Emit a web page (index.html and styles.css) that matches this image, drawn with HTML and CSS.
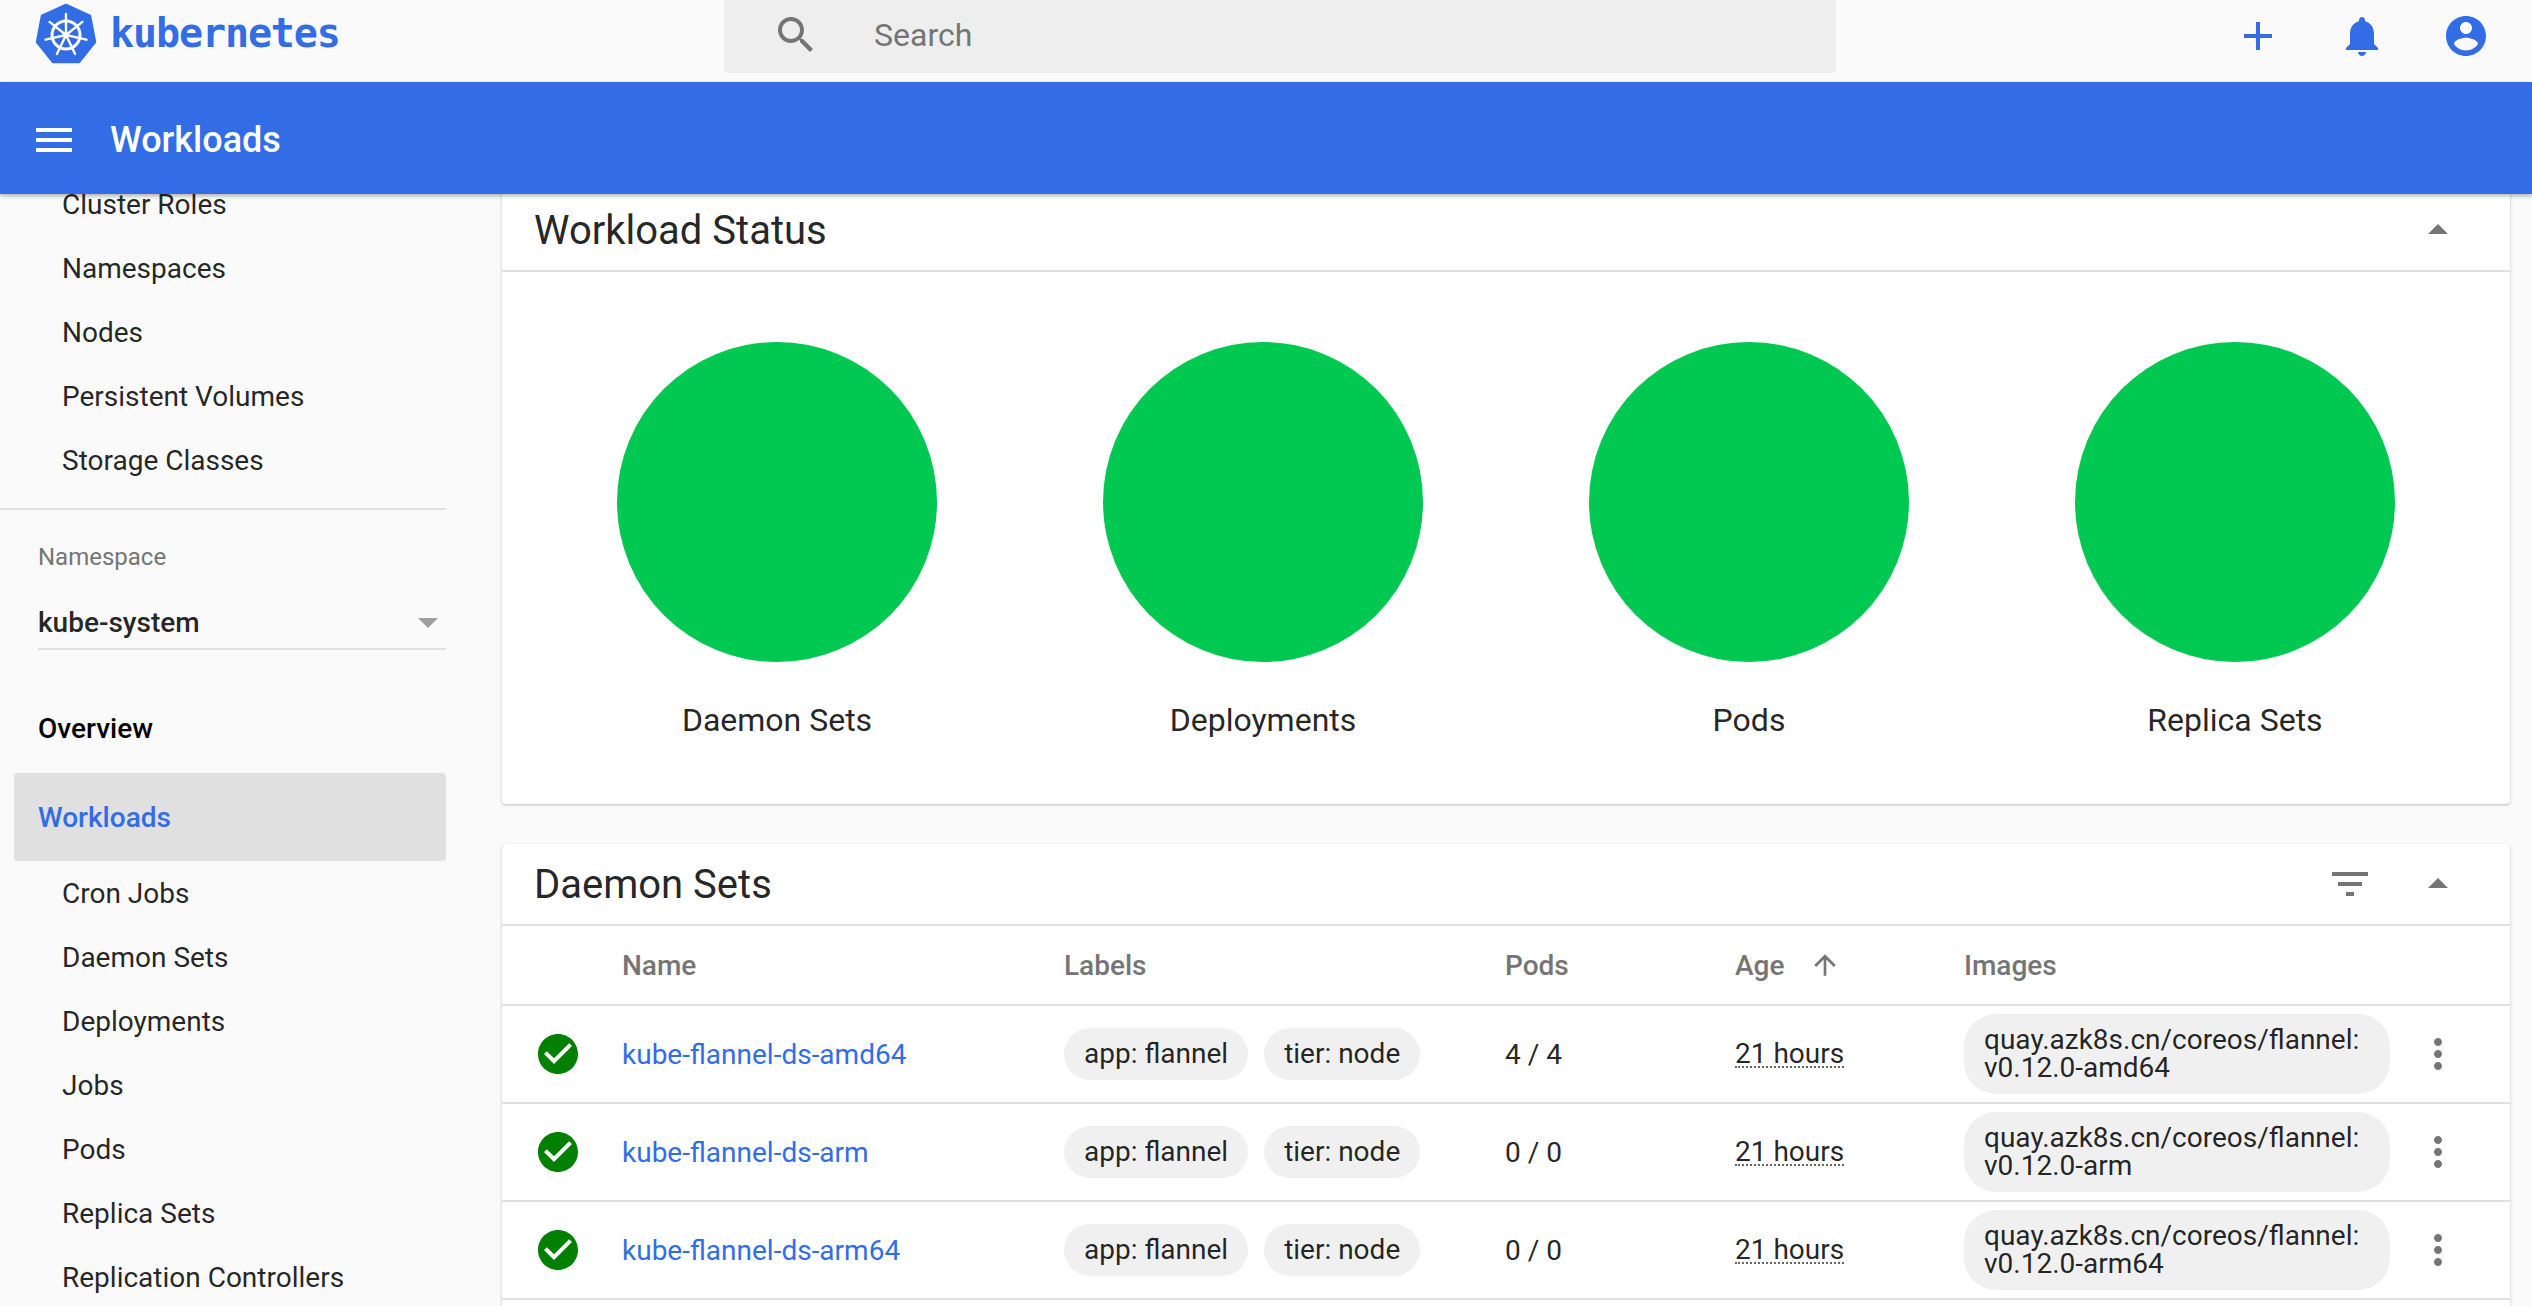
FILE: index.html
```html
<!DOCTYPE html>
<html lang="en">
<head>
    <meta charset="UTF-8">
    <title>Workloads - Kubernetes Dashboard</title>
    <link rel="stylesheet" href="styles.css">
</head>
<body>
<header class="toolbar">
    <div class="brand">
        <svg class="brand-logo" width="64" height="64" viewBox="0 0 64 64">
            <polygon points="32,4 56,15 61,41 45,61 19,61 3,41 8,15" fill="#326de6" stroke="#326de6" stroke-width="2.5" stroke-linejoin="round"/>
            <g stroke="#fff" fill="none">
                <circle cx="32" cy="34" r="14" stroke-width="3"/>
                <g stroke-width="2.4" stroke-linecap="round">
                    <line x1="32" y1="34" x2="32" y2="13"/>
                    <line x1="32" y1="34" x2="48.4" y2="20.9"/>
                    <line x1="32" y1="34" x2="52.5" y2="38.7"/>
                    <line x1="32" y1="34" x2="41.1" y2="52.9"/>
                    <line x1="32" y1="34" x2="22.9" y2="52.9"/>
                    <line x1="32" y1="34" x2="11.5" y2="38.7"/>
                    <line x1="32" y1="34" x2="15.6" y2="20.9"/>
                </g>
            </g>
            <circle cx="32" cy="34" r="3" fill="#fff"/>
        </svg>
        <span class="brand-name">kubernetes</span>
    </div>
    <div class="search">
        <svg class="icon icon-grey" viewBox="0 0 24 24"><path d="M15.5 14h-.79l-.28-.27C15.41 12.59 16 11.11 16 9.5 16 5.91 13.09 3 9.5 3S3 5.91 3 9.5 5.91 16 9.5 16c1.61 0 3.09-.59 4.23-1.57l.27.28v.79l5 4.99L20.49 19l-4.99-5zm-6 0C7.01 14 5 11.99 5 9.5S7.01 5 9.5 5 14 7.01 14 9.5 11.99 14 9.5 14z"/></svg>
        <span class="search-text">Search</span>
    </div>
    <div class="toolbar-actions">
        <svg class="icon icon-blue" viewBox="0 0 24 24"><path d="M19 13h-6v6h-2v-6H5v-2h6V5h2v6h6v2z"/></svg>
        <svg class="icon icon-blue" viewBox="0 0 24 24"><path d="M12 22c1.1 0 2-.9 2-2h-4c0 1.1.89 2 2 2zm6-6v-5c0-3.07-1.64-5.64-4.5-6.32V4c0-.83-.67-1.5-1.5-1.5s-1.5.67-1.5 1.5v.68C7.63 5.36 6 7.92 6 11v5l-2 2v1h16v-1l-2-2z"/></svg>
        <svg class="icon icon-blue" viewBox="0 0 24 24"><path d="M12 2C6.48 2 2 6.48 2 12s4.48 10 10 10 10-4.48 10-10S17.52 2 12 2zm0 3c1.66 0 3 1.34 3 3s-1.34 3-3 3-3-1.34-3-3 1.34-3 3-3zm0 14.2c-2.5 0-4.71-1.28-6-3.22.03-1.99 4-3.08 6-3.08 1.99 0 5.97 1.09 6 3.08-1.29 1.94-3.5 3.22-6 3.22z"/></svg>
    </div>
</header>

<div class="titlebar">
    <svg class="icon icon-white" viewBox="0 0 24 24"><path d="M3 18h18v-2H3v2zm0-5h18v-2H3v2zm0-7v2h18V6H3z"/></svg>
    <span class="titlebar-text">Workloads</span>
</div>

<div class="main">
    <nav class="sidebar">
        <div class="nav-sub">Cluster Roles</div>
        <div class="nav-sub">Namespaces</div>
        <div class="nav-sub">Nodes</div>
        <div class="nav-sub">Persistent Volumes</div>
        <div class="nav-sub">Storage Classes</div>
        <div class="nav-divider"></div>
        <div class="ns-label">Namespace</div>
        <div class="ns-select">
            <span>kube-system</span>
            <svg class="icon icon-lightgrey" viewBox="0 0 24 24"><path d="M7 10l5 5 5-5z"/></svg>
        </div>
        <div class="nav-top">Overview</div>
        <div class="nav-top nav-active">Workloads</div>
        <div class="nav-sub">Cron Jobs</div>
        <div class="nav-sub">Daemon Sets</div>
        <div class="nav-sub">Deployments</div>
        <div class="nav-sub">Jobs</div>
        <div class="nav-sub">Pods</div>
        <div class="nav-sub">Replica Sets</div>
        <div class="nav-sub">Replication Controllers</div>
    </nav>

    <main class="content">
        <section class="card">
            <div class="card-header">
                <h2 class="card-title">Workload Status</h2>
                <svg class="icon icon-grey" viewBox="0 0 24 24"><path d="M7 14l5-5 5 5z"/></svg>
            </div>
            <div class="status-grid">
                <div class="status-item"><div class="status-circle"></div><div class="status-name">Daemon Sets</div></div>
                <div class="status-item"><div class="status-circle"></div><div class="status-name">Deployments</div></div>
                <div class="status-item"><div class="status-circle"></div><div class="status-name">Pods</div></div>
                <div class="status-item"><div class="status-circle"></div><div class="status-name">Replica Sets</div></div>
            </div>
        </section>

        <section class="card card-grow">
            <div class="card-header">
                <h2 class="card-title">Daemon Sets</h2>
                <svg class="icon icon-grey" viewBox="0 0 24 24"><path d="M10 18h4v-2h-4v2zM3 6v2h18V6H3zm3 7h12v-2H6v2z"/></svg>
                <svg class="icon icon-grey" viewBox="0 0 24 24"><path d="M7 14l5-5 5 5z"/></svg>
            </div>
            <div class="table-row table-head">
                <span></span>
                <span>Name</span>
                <span>Labels</span>
                <span>Pods</span>
                <span class="age-head">Age
                    <svg class="sort-icon" viewBox="0 0 24 24"><path d="M4 12l1.41 1.41L11 7.83V20h2V7.83l5.58 5.59L20 12l-8-8-8 8z"/></svg>
                </span>
                <span>Images</span>
                <span></span>
            </div>
            <div class="table-row">
                <svg class="icon icon-green" viewBox="0 0 24 24"><path d="M12 2C6.48 2 2 6.48 2 12s4.48 10 10 10 10-4.48 10-10S17.52 2 12 2zm-2 15l-5-5 1.41-1.41L10 14.17l7.59-7.59L19 8l-9 9z"/></svg>
                <a class="row-link">kube-flannel-ds-amd64</a>
                <div class="chips"><span class="chip">app: flannel</span><span class="chip">tier: node</span></div>
                <span>4 / 4</span>
                <span class="age">21 hours</span>
                <span class="chip chip-image">quay.azk8s.cn/coreos/flannel:<br>v0.12.0-amd64</span>
                <svg class="icon icon-grey row-menu" viewBox="0 0 24 24"><path d="M12 8c1.1 0 2-.9 2-2s-.9-2-2-2-2 .9-2 2 .9 2 2 2zm0 2c-1.1 0-2 .9-2 2s.9 2 2 2 2-.9 2-2-.9-2-2-2zm0 6c-1.1 0-2 .9-2 2s.9 2 2 2 2-.9 2-2-.9-2-2-2z"/></svg>
            </div>
            <div class="table-row">
                <svg class="icon icon-green" viewBox="0 0 24 24"><path d="M12 2C6.48 2 2 6.48 2 12s4.48 10 10 10 10-4.48 10-10S17.52 2 12 2zm-2 15l-5-5 1.41-1.41L10 14.17l7.59-7.59L19 8l-9 9z"/></svg>
                <a class="row-link">kube-flannel-ds-arm</a>
                <div class="chips"><span class="chip">app: flannel</span><span class="chip">tier: node</span></div>
                <span>0 / 0</span>
                <span class="age">21 hours</span>
                <span class="chip chip-image">quay.azk8s.cn/coreos/flannel:<br>v0.12.0-arm</span>
                <svg class="icon icon-grey row-menu" viewBox="0 0 24 24"><path d="M12 8c1.1 0 2-.9 2-2s-.9-2-2-2-2 .9-2 2 .9 2 2 2zm0 2c-1.1 0-2 .9-2 2s.9 2 2 2 2-.9 2-2-.9-2-2-2zm0 6c-1.1 0-2 .9-2 2s.9 2 2 2 2-.9 2-2-.9-2-2-2z"/></svg>
            </div>
            <div class="table-row">
                <svg class="icon icon-green" viewBox="0 0 24 24"><path d="M12 2C6.48 2 2 6.48 2 12s4.48 10 10 10 10-4.48 10-10S17.52 2 12 2zm-2 15l-5-5 1.41-1.41L10 14.17l7.59-7.59L19 8l-9 9z"/></svg>
                <a class="row-link">kube-flannel-ds-arm64</a>
                <div class="chips"><span class="chip">app: flannel</span><span class="chip">tier: node</span></div>
                <span>0 / 0</span>
                <span class="age">21 hours</span>
                <span class="chip chip-image">quay.azk8s.cn/coreos/flannel:<br>v0.12.0-arm64</span>
                <svg class="icon icon-grey row-menu" viewBox="0 0 24 24"><path d="M12 8c1.1 0 2-.9 2-2s-.9-2-2-2-2 .9-2 2 .9 2 2 2zm0 2c-1.1 0-2 .9-2 2s.9 2 2 2 2-.9 2-2-.9-2-2-2zm0 6c-1.1 0-2 .9-2 2s.9 2 2 2 2-.9 2-2-.9-2-2-2z"/></svg>
            </div>
        </section>
    </main>
</div>
</body>
</html>
```

FILE: styles.css
```css
* {
    margin: 0;
    padding: 0;
    box-sizing: border-box;
}

body {
    font-family: Roboto, 'Liberation Sans', sans-serif;
    font-size: 28px;
    color: rgba(0, 0, 0, 0.87);
    background: #fafafa;
    height: 100vh;
    overflow: hidden;
    display: flex;
    flex-direction: column;
}

.icon {
    width: 48px;
    height: 48px;
    flex: none;
    display: block;
}
.icon-grey { fill: #757575; }
.icon-lightgrey { fill: #9e9e9e; }
.icon-blue { fill: #326de6; }
.icon-white { fill: #fff; }
.icon-green { fill: #008000; }

/* top bar */
.toolbar {
    height: 82px;
    flex: none;
    display: flex;
    align-items: flex-start;
    background: #fafafa;
}
.brand {
    width: 724px;
    display: flex;
    align-items: center;
    padding: 1px 0 0 34px;
}
.brand-logo {
    flex: none;
}
.brand-name {
    font-family: 'DejaVu Sans Mono', monospace;
    font-size: 40px;
    font-weight: 700;
    line-height: 64px;
    letter-spacing: -1.1px;
    color: #326de6;
    margin-left: 12px;
}
.search {
    width: 1112px;
    height: 73px;
    display: flex;
    align-items: center;
    padding: 0 0 4px 48px;
    background: #eeeeee;
    border-radius: 0 0 4px 4px;
}
.search-text {
    font-size: 32px;
    color: #757575;
    margin-left: 54px;
}
.toolbar-actions {
    display: flex;
    gap: 56px;
    margin: 12px 0 0 398px;
}

.titlebar {
    height: 112px;
    flex: none;
    display: flex;
    align-items: center;
    padding: 4px 0 0 30px;
    background: #326de6;
    box-shadow: 0 2px 4px rgba(0, 0, 0, 0.3);
    position: relative;
    z-index: 2;
}
.titlebar-text {
    font-size: 36px;
    font-weight: 500;
    color: #fff;
    margin-left: 32px;
}

.main {
    flex: 1;
    min-height: 0;
    display: flex;
    overflow: hidden;
}

/* side nav */
.sidebar {
    width: 502px;
    flex: none;
    padding-right: 56px;
    margin-top: -22px;
}
.nav-sub {
    height: 64px;
    line-height: 64px;
    padding: 1px 0 0 62px;
    color: rgba(0, 0, 0, 0.87);
}
.nav-divider {
    height: 2px;
    background: #e0e0e0;
    margin-top: 16px;
}
.ns-label {
    font-size: 24px;
    line-height: 32px;
    color: #757575;
    margin: 31px 0 0 38px;
}
.ns-select {
    height: 60px;
    margin: 17px 0 0 38px;
    padding-top: 6px;
    font-weight: 500;
    border-bottom: 2px solid #e0e0e0;
    display: flex;
    align-items: center;
    justify-content: space-between;
}
.ns-select .icon {
    margin-right: -6px;
}
.nav-top {
    height: 64px;
    line-height: 64px;
    font-weight: 500;
    color: #000;
    padding-left: 38px;
    margin-top: 47px;
}
.nav-active {
    height: 88px;
    line-height: 89px;
    margin: 12px 0 0 14px;
    padding-left: 24px;
    color: #326de6;
    background: #e0e0e0;
    border-radius: 4px;
}

/* cards */
.content {
    flex: 1;
    min-width: 0;
    padding-right: 22px;
    margin-top: -4px;
    display: flex;
    flex-direction: column;
    gap: 40px;
}
.card {
    background: #fff;
    border-radius: 4px;
    box-shadow: 0 1px 3px rgba(0, 0, 0, 0.25);
}
/* the table goes on below the fold */
.card-grow {
    flex: 1;
    margin-bottom: -20px;
}
.card-header {
    height: 82px;
    display: flex;
    align-items: center;
    gap: 40px;
    padding: 0 48px 0 32px;
    border-bottom: 2px solid #e0e0e0;
}
.card-title {
    flex: 1;
    font-size: 40px;
    font-weight: 400;
}
.status-grid {
    display: grid;
    grid-template-columns: repeat(4, 1fr);
    padding: 70px 32px 60px;
}
.status-item {
    display: flex;
    flex-direction: column;
    align-items: center;
}
.status-circle {
    width: 320px;
    height: 320px;
    border-radius: 50%;
    background: #00c851;
}
.status-name {
    font-size: 32px;
    line-height: 48px;
    margin-top: 34px;
}

/* table */
.table-row {
    display: grid;
    grid-template-columns: 120px 442px 441px 230px 229px 426px 1fr;
    align-items: center;
    height: 98px;
    border-bottom: 2px solid #e0e0e0;
}
.table-row > .icon-green {
    margin-left: 32px;
}
.table-head {
    height: 80px;
    font-weight: 500;
    color: #757575;
}
.age-head {
    display: flex;
    align-items: center;
    gap: 25px;
}
.sort-icon {
    width: 32px;
    height: 32px;
    fill: #757575;
}
.row-link {
    color: #326de6;
}
.chips {
    display: flex;
    gap: 16px;
}
.chip {
    background: #f0f0f0;
    border-radius: 26px;
    line-height: 52px;
    padding: 0 20px;
}
.chip-image {
    line-height: 28px;
    padding: 12px 20px;
    border-radius: 32px;
    height: 80px;
}
.age {
    justify-self: start;
    padding-top: 2px;
    border-bottom: 2px dotted #666;
    line-height: 24px;
}
.row-menu {
    margin-left: 24px;
}
```
